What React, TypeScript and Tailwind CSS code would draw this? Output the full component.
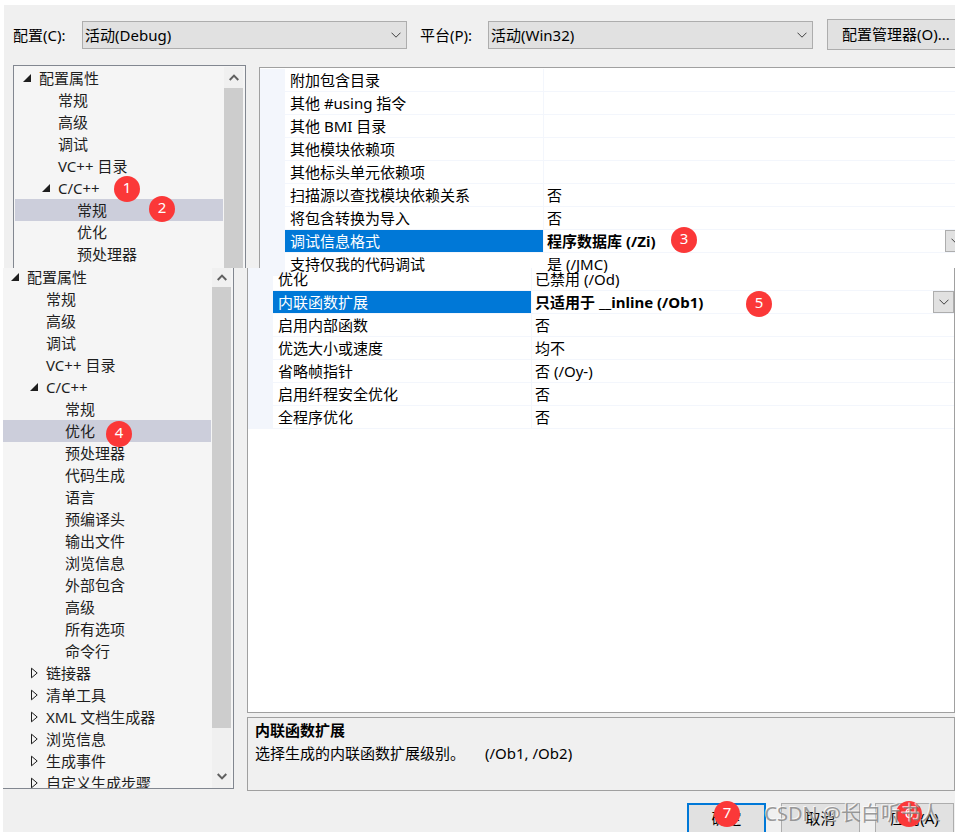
import { useState } from "react";
import type { ReactNode } from "react";
import clsx from "clsx";

type TreeItem = {
  label: string;
  level: 0 | 1 | 2;
  state?: "open" | "closed";
  badge?: ReactNode;
};

type PropertyRow = {
  name: string;
  value?: string;
  badge?: ReactNode;
};

const INDENT = ["pl-[8px]", "pl-[27px]", "pl-[46px]"];

function Badge({ n, className }: { n: number; className: string }) {
  return (
    <span
      className={clsx(
        "absolute z-20 flex size-[26px] items-center justify-center rounded-full bg-[#fb3838] pb-1 text-[15px] leading-none font-normal text-white",
        className,
      )}
    >
      {n}
    </span>
  );
}

function Chevron({ className }: { className?: string }) {
  return (
    <svg
      viewBox="0 0 10 6"
      className={clsx("h-[6px] w-[10px]", className)}
      fill="none"
      stroke="currentColor"
    >
      <path d="M0.5 0.7 L5 5.2 L9.5 0.7" />
    </svg>
  );
}

function ScrollArrow({ up }: { up?: boolean }) {
  return (
    <button
      type="button"
      aria-label={up ? "向上滚动" : "向下滚动"}
      className="flex h-[19px] w-full shrink-0 items-center justify-center text-[#606060]"
    >
      <svg
        viewBox="0 0 10 7"
        className="h-[7px] w-[10px]"
        fill="none"
        stroke="currentColor"
        strokeWidth="2"
      >
        <path d={up ? "M0.7 6 L5 1.6 L9.3 6" : "M0.7 1 L5 5.4 L9.3 1"} />
      </svg>
    </button>
  );
}

function Expander({ state }: { state?: "open" | "closed" }) {
  return (
    <svg viewBox="0 0 8 12" className="mr-2 h-3 w-2 shrink-0">
      {state === "open" && <path d="M8 2 V10 H0 Z" fill="#1e1e1e" />}
      {state === "closed" && (
        <path d="M1.5 1.2 V10.8 L7.2 6 Z" fill="none" stroke="#1e1e1e" />
      )}
    </svg>
  );
}

const TOP_TREE: TreeItem[] = [
  { label: "配置属性", level: 0, state: "open" },
  { label: "常规", level: 1 },
  { label: "高级", level: 1 },
  { label: "调试", level: 1 },
  { label: "VC++ 目录", level: 1 },
  {
    label: "C/C++",
    level: 1,
    state: "open",
    badge: <Badge n={1} className="-top-px left-[99px]" />,
  },
  {
    label: "常规",
    level: 2,
    badge: <Badge n={2} className="-top-[3px] left-[134px]" />,
  },
  { label: "优化", level: 2 },
  { label: "预处理器", level: 2 },
];

const BOTTOM_TREE: TreeItem[] = [
  { label: "配置属性", level: 0, state: "open" },
  { label: "常规", level: 1 },
  { label: "高级", level: 1 },
  { label: "调试", level: 1 },
  { label: "VC++ 目录", level: 1 },
  { label: "C/C++", level: 1, state: "open" },
  { label: "常规", level: 2 },
  {
    label: "优化",
    level: 2,
    badge: <Badge n={4} className="top-px left-[103px]" />,
  },
  { label: "预处理器", level: 2 },
  { label: "代码生成", level: 2 },
  { label: "语言", level: 2 },
  { label: "预编译头", level: 2 },
  { label: "输出文件", level: 2 },
  { label: "浏览信息", level: 2 },
  { label: "外部包含", level: 2 },
  { label: "高级", level: 2 },
  { label: "所有选项", level: 2 },
  { label: "命令行", level: 2 },
  { label: "链接器", level: 1, state: "closed" },
  { label: "清单工具", level: 1, state: "closed" },
  { label: "XML 文档生成器", level: 1, state: "closed" },
  { label: "浏览信息", level: 1, state: "closed" },
  { label: "生成事件", level: 1, state: "closed" },
  { label: "自定义生成步骤", level: 1, state: "closed" },
];

const GENERAL_ROWS: PropertyRow[] = [
  { name: "附加包含目录" },
  { name: "其他 #using 指令" },
  { name: "其他 BMI 目录" },
  { name: "其他模块依赖项" },
  { name: "其他标头单元依赖项" },
  { name: "扫描源以查找模块依赖关系", value: "否" },
  { name: "将包含转换为导入", value: "否" },
  {
    name: "调试信息格式",
    value: "程序数据库 (/Zi)",
    badge: <Badge n={3} className="-top-[3px] left-[127px]" />,
  },
  { name: "支持仅我的代码调试", value: "是 (/JMC)" },
];

const OPTIMIZE_ROWS: PropertyRow[] = [
  { name: "优化", value: "已禁用 (/Od)" },
  {
    name: "内联函数扩展",
    value: "只适用于 __inline (/Ob1)",
    badge: <Badge n={5} className="top-0 left-[214px]" />,
  },
  { name: "启用内部函数", value: "否" },
  { name: "优选大小或速度", value: "均不" },
  { name: "省略帧指针", value: "否 (/Oy-)" },
  { name: "启用纤程安全优化", value: "否" },
  { name: "全程序优化", value: "否" },
];

function Tree({
  items,
  initial,
  className,
}: {
  items: TreeItem[];
  initial: number;
  className?: string;
}) {
  const [selected, setSelected] = useState(initial);

  return (
    <ul className={clsx("w-[208px] shrink-0 text-[#1e1e1e]", className)}>
      {items.map((item, index) => (
        <li key={index} className="relative">
          <button
            type="button"
            onClick={() => setSelected(index)}
            className={clsx(
              "flex h-[22px] w-full items-center text-left leading-[22px] whitespace-nowrap",
              INDENT[item.level],
              selected === index && "bg-[#cccedb]",
            )}
          >
            <Expander state={item.state} />
            {item.label}
          </button>
          {item.badge}
        </li>
      ))}
    </ul>
  );
}

function PropertyTable({
  rows,
  initial,
  lastOpen,
}: {
  rows: PropertyRow[];
  initial: number;
  lastOpen?: boolean;
}) {
  const [selected, setSelected] = useState(initial);

  return (
    <table className="relative z-10 w-full table-fixed border-separate border-spacing-0 text-black">
      <colgroup>
        <col className="w-[25px]" />
        <col className="w-[259px]" />
        <col />
      </colgroup>
      <tbody>
        {rows.map((row, index) => {
          const active = selected === index;
          const line =
            lastOpen && index === rows.length - 1
              ? "border-transparent"
              : "border-[#f3f6fc]";
          return (
            <tr key={row.name} onClick={() => setSelected(index)}>
              <td className="bg-[#f3f6fc] p-0" />
              <th
                scope="row"
                className={clsx(
                  "h-[23px] border-r border-b bg-clip-padding p-0 pl-[5px] text-left leading-[22px] font-normal whitespace-nowrap",
                  line,
                  active && "bg-[#0078d7] text-white",
                )}
              >
                {row.name}
              </th>
              <td
                className={clsx(
                  "relative h-[23px] border-b p-0 pl-[3px] leading-[22px] whitespace-nowrap",
                  line,
                  active && "font-bold",
                )}
              >
                {row.value}
                {row.badge}
                {active && (
                  <button
                    type="button"
                    aria-label="展开选项"
                    className="absolute top-0 right-0 flex h-[22px] w-[21px] items-center justify-center border border-[#adadad] bg-[#e1e1e1] text-[#404040]"
                  >
                    <Chevron />
                  </button>
                )}
              </td>
            </tr>
          );
        })}
      </tbody>
    </table>
  );
}

function Dropdown({ id, value }: { id: string; value: string }) {
  return (
    <div className="relative min-w-0 flex-1">
      <select
        id={id}
        className="block h-7 w-full appearance-none rounded-none border border-[#adadad] bg-[#e1e1e1] pl-[2px] leading-[24px] text-black"
      >
        <option>{value}</option>
      </select>
      <Chevron className="pointer-events-none absolute top-[11px] right-[6px] text-[#404040]" />
    </div>
  );
}

export default function App() {
  return (
    <div className="relative flex h-screen flex-col overflow-hidden bg-white pt-[5px] pb-px font-['Noto_Sans','Noto_Sans_CJK_SC',sans-serif] text-[15px] text-black">
      <section className="ml-1 flex h-[263px] shrink-0 flex-col bg-[#f0f0f0] pl-[9px]">
        <header className="-mr-3 flex h-[60px] shrink-0 items-center whitespace-nowrap">
          <label htmlFor="config" className="w-[69px] shrink-0">
            配置(C):
          </label>
          <Dropdown id="config" value="活动(Debug)" />
          <label htmlFor="platform" className="ml-[13px] w-[68px] shrink-0">
            平台(P):
          </label>
          <Dropdown id="platform" value="活动(Win32)" />
          <button
            type="button"
            className="mb-px ml-[14px] h-[31px] w-[140px] shrink-0 border border-[#adadad] bg-[#e1e1e1] pl-[14px] text-left"
          >
            配置管理器(O)...
          </button>
        </header>

        <div className="flex min-h-0 flex-1 gap-[13px]">
          <nav className="flex w-[233px] shrink-0 overflow-hidden border border-b-0 border-[#828790] bg-[#f5f5f5] pt-px pl-px">
            <Tree items={TOP_TREE} initial={6} />
            <div className="ml-px flex w-[19px] flex-col bg-[#f0f0f0] pt-px">
              <ScrollArrow up />
              <div className="mt-px flex-1 bg-[#cdcdcd]" />
            </div>
          </nav>
          <main className="mt-[2px] -mr-3 min-w-0 flex-1 border border-b-0 border-[#a0a0a0] bg-white pt-px">
            <PropertyTable rows={GENERAL_ROWS} initial={7} lastOpen />
          </main>
        </div>
      </section>

      <section className="ml-[3px] flex min-h-0 flex-1 flex-col bg-[#f0f0f0]">
        <div className="flex min-h-0 flex-1 gap-[13px]">
          <nav className="mb-[2px] flex w-[231px] shrink-0 overflow-hidden border-r border-b border-[#828790] bg-[#f5f5f5]">
            <Tree items={BOTTOM_TREE} initial={7} className="-mt-[2px]" />
            <div className="ml-px flex w-[19px] flex-col bg-[#f0f0f0] pb-[2px]">
              <ScrollArrow up />
              <div className="mb-[39px] flex-1 bg-[#cdcdcd]" />
              <ScrollArrow />
            </div>
          </nav>
          <div className="flex min-w-0 flex-1 flex-col gap-1">
            <main className="min-h-0 flex-1 border border-t-0 border-[#a0a0a0] bg-white">
              <PropertyTable rows={OPTIMIZE_ROWS} initial={1} />
            </main>
            <aside className="h-[74px] shrink-0 border border-[#a0a0a0] pt-px pl-[7px] leading-[23px]">
              <h2 className="font-bold">内联函数扩展</h2>
              <p>
                选择生成的内联函数扩展级别。
                <span className="ml-5">(/Ob1, /Ob2)</span>
              </p>
            </aside>
          </div>
        </div>

        <footer className="flex h-[41px] shrink-0 justify-end gap-[15px] overflow-hidden pt-3 pr-px">
          <button
            type="button"
            className="relative h-[31px] w-[79px] border-2 border-[#0078d7] bg-[#e1e1e1]"
          >
            确定
            <Badge n={7} className="-top-1 left-[25px]" />
          </button>
          <button
            type="button"
            className="h-[31px] w-[79px] border border-[#adadad] bg-[#e1e1e1]"
          >
            取消
          </button>
          <button
            type="button"
            className="relative h-[31px] w-[79px] border border-[#adadad] bg-[#e1e1e1]"
          >
            应用(A)
            <Badge n={6} className="-top-[3px] left-[20px]" />
          </button>
        </footer>
      </section>

      <p className="pointer-events-none absolute right-[14px] bottom-[5px] z-30 text-[20px] leading-7 whitespace-nowrap text-[#828282]/80 [text-shadow:-1px_-1px_0_rgba(255,255,255,0.7)]">
        CSDN @长白听书人
      </p>
    </div>
  );
}
